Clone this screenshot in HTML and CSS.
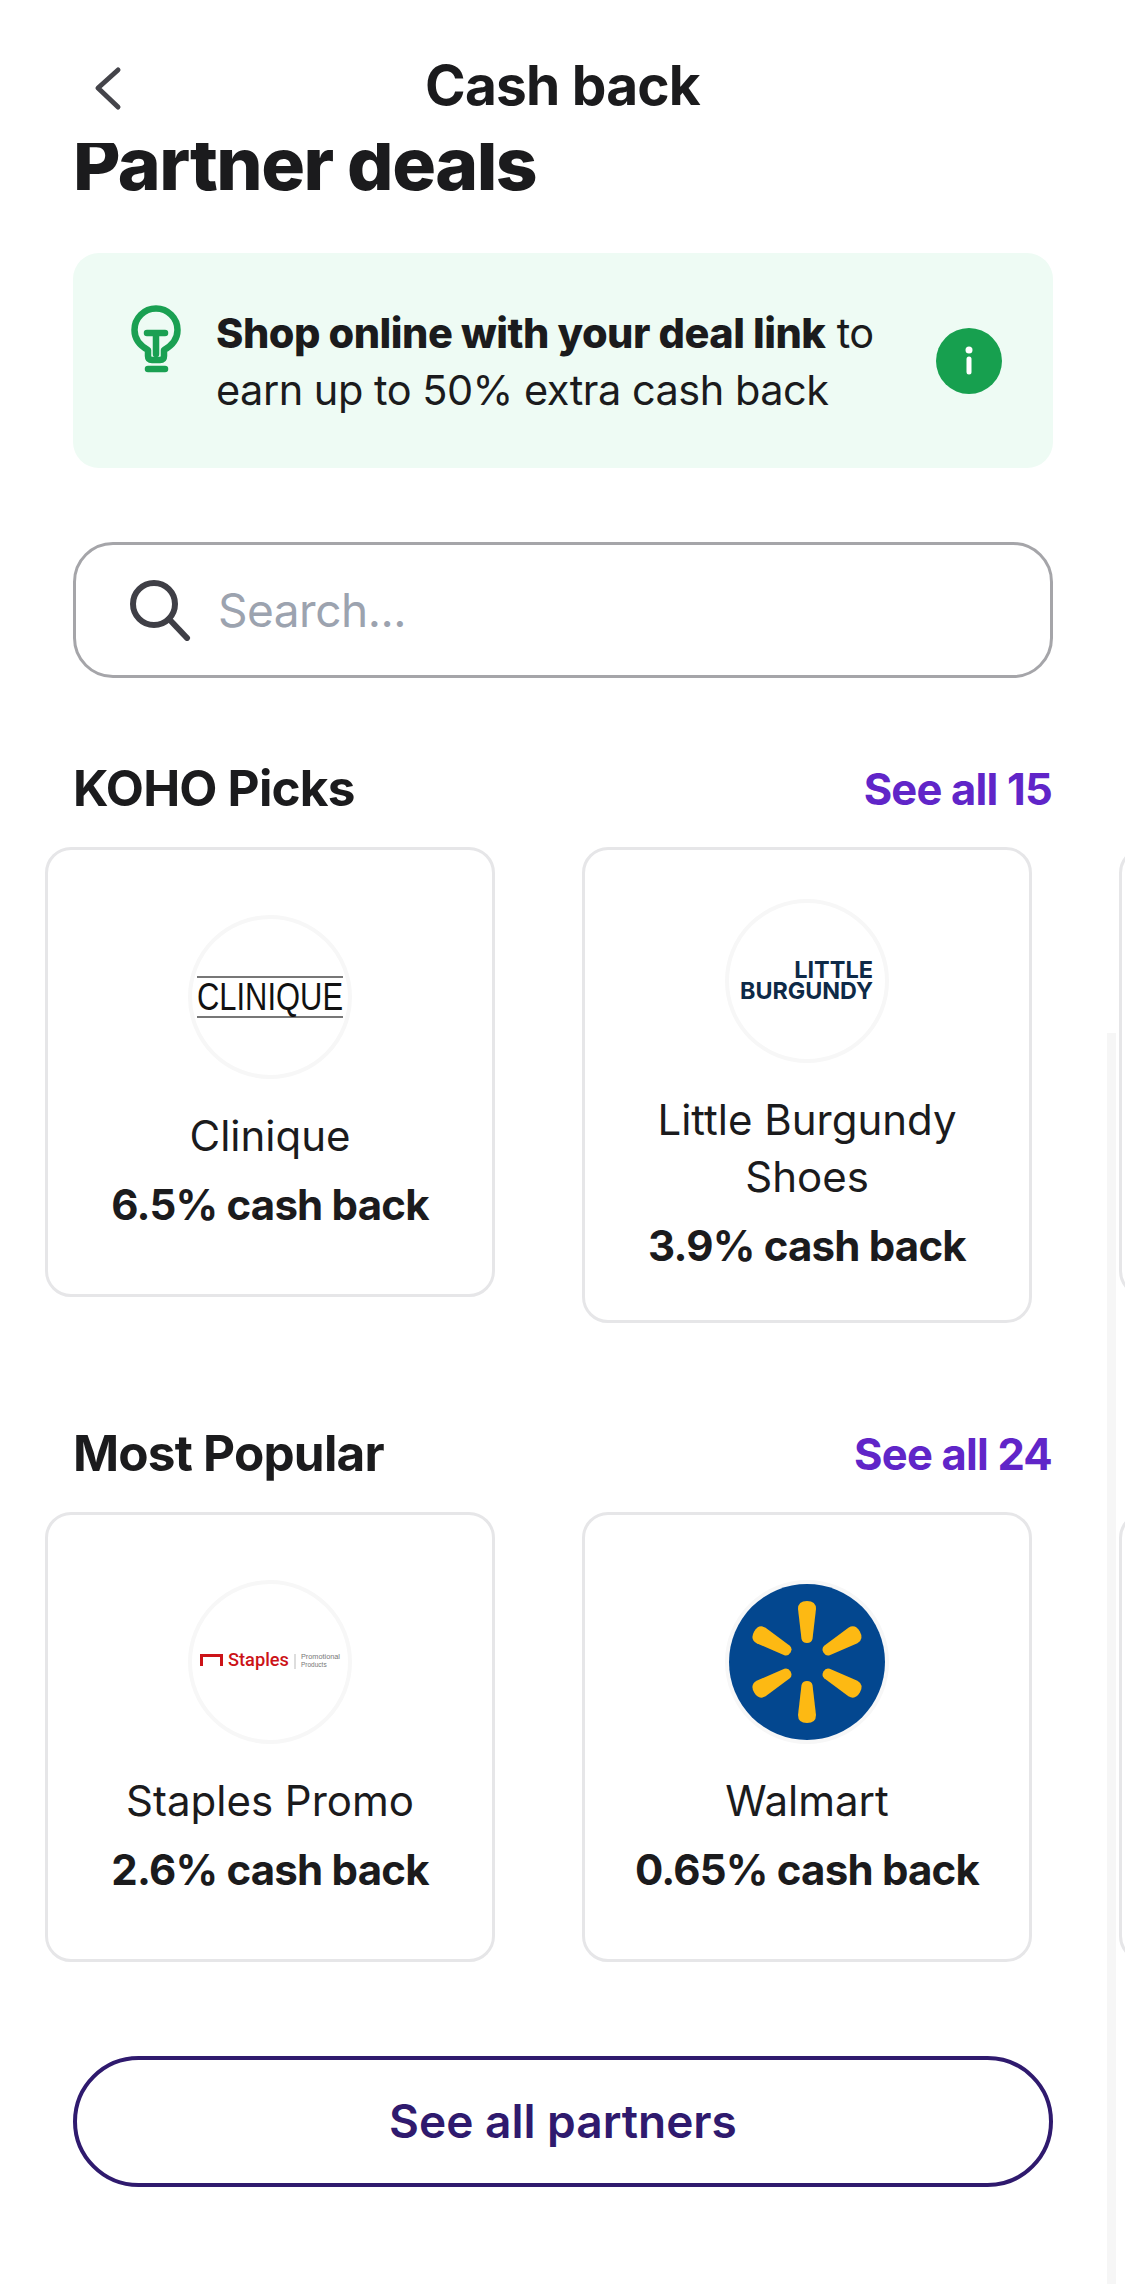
FILE: index.html
```html
<!DOCTYPE html>
<html lang="en">
<head>
    <meta charset="UTF-8">
    <title>Cash back</title>
    <link rel="stylesheet" href="styles.css">
</head>
<body>
<div class="page">
    <div class="topbar">
        <svg class="back" width="40" height="56" viewBox="0 0 40 56"><path d="M30 12 L10 30 L30 49" fill="none" stroke="#44444a" stroke-width="5" stroke-linecap="round" stroke-linejoin="round"/></svg>
        <div class="topbar-title">Cash back</div>
    </div>
    <div class="page-title"><h1>Partner deals</h1></div>

    <div class="banner">
        <svg class="bulb" width="60" height="80" viewBox="0 0 60 80">
            <g fill="none" stroke="#1aa052" stroke-width="6.5" stroke-linecap="round" stroke-linejoin="round">
                <path d="M22 50 C13 45 8.500 38 8.500 30 A21.500 21.500 0 1 1 51.500 30 C51.500 38 47 45 38 50 V56 Q38 60 34 60 H26 Q22 60 22 56 Z"/>
                <path d="M21 33 H39 M30 33 V54"/>
                <path d="M22 69 H39"/>
            </g>
        </svg>
        <p class="banner-text"><b>Shop online with your deal link</b> to<br>earn up to 50% extra cash back</p>
        <div class="info">
            <svg width="66" height="66" viewBox="0 0 66 66"><circle cx="33" cy="33" r="33" fill="#17a04f"/><circle cx="33" cy="22" r="3.500" fill="#fff"/><path d="M33 31 V44" stroke="#fff" stroke-width="5" stroke-linecap="round"/></svg>
        </div>
    </div>

    <div class="search">
        <svg width="62" height="62" viewBox="0 0 62 62"><circle cx="25" cy="25" r="21" fill="none" stroke="#3f3f46" stroke-width="6"/><path d="M40 40 L58 59" stroke="#3f3f46" stroke-width="6" stroke-linecap="round"/></svg>
        <span>Search...</span>
    </div>

    <div class="section-head section-first">
        <h2>KOHO Picks</h2>
        <a href="#">See all 15</a>
    </div>
    <div class="cards">
        <div class="card">
            <div class="logo">
                <svg width="156" height="50" viewBox="0 0 156 50">
                    <path d="M5 5 H151 M5 45 H151" stroke="#777" stroke-width="2"/>
                    <text x="78" y="38" text-anchor="middle" textLength="146" lengthAdjust="spacingAndGlyphs" class="logo-clinique">CLINIQUE</text>
                </svg>
            </div>
            <div class="name">Clinique</div>
            <div class="rate">6.5% cash back</div>
        </div>
        <div class="card">
            <div class="logo">
                <svg width="140" height="50" viewBox="0 0 140 50">
                    <text x="136" y="22" text-anchor="end" class="logo-burgundy">LITTLE</text>
                    <text x="136" y="43" text-anchor="end" textLength="133" lengthAdjust="spacingAndGlyphs" class="logo-burgundy">BURGUNDY</text>
                </svg>
            </div>
            <div class="name">Little Burgundy<br>Shoes</div>
            <div class="rate">3.9% cash back</div>
        </div>
        <div class="card"></div>
    </div>

    <div class="section-head section-second">
        <h2>Most Popular</h2>
        <a href="#">See all 24</a>
    </div>
    <div class="cards">
        <div class="card">
            <div class="logo">
                <svg width="150" height="40" viewBox="0 0 150 40">
                    <path d="M6.500 24 V13.500 H26.500 V24" fill="none" stroke="#cc1318" stroke-width="3"/>
                    <text x="33" y="24" textLength="61" lengthAdjust="spacingAndGlyphs" class="logo-staples">Staples</text>
                    <path d="M100 12 V27" stroke="#bbb" stroke-width="1"/>
                    <text x="106" y="17" textLength="39" lengthAdjust="spacingAndGlyphs" class="logo-promo">Promotional</text>
                    <text x="106" y="25" class="logo-promo">Products</text>
                </svg>
            </div>
            <div class="name">Staples Promo</div>
            <div class="rate">2.6% cash back</div>
        </div>
        <div class="card">
            <div class="logo logo-walmart">
                <svg width="156" height="156" viewBox="-78 -78 156 156">
                    <circle r="78" fill="#03478f"/>
                    <g fill="#fdb913">
                        <path d="M-9 -53 Q-9 -61 0 -61 Q9 -61 9 -53 L5.500 -23 Q4.500 -19 0 -19 Q-4.500 -19 -5.500 -23 Z"/>
                        <path transform="rotate(60)" d="M-9 -53 Q-9 -61 0 -61 Q9 -61 9 -53 L5.500 -23 Q4.500 -19 0 -19 Q-4.500 -19 -5.500 -23 Z"/>
                        <path transform="rotate(120)" d="M-9 -53 Q-9 -61 0 -61 Q9 -61 9 -53 L5.500 -23 Q4.500 -19 0 -19 Q-4.500 -19 -5.500 -23 Z"/>
                        <path transform="rotate(180)" d="M-9 -53 Q-9 -61 0 -61 Q9 -61 9 -53 L5.500 -23 Q4.500 -19 0 -19 Q-4.500 -19 -5.500 -23 Z"/>
                        <path transform="rotate(240)" d="M-9 -53 Q-9 -61 0 -61 Q9 -61 9 -53 L5.500 -23 Q4.500 -19 0 -19 Q-4.500 -19 -5.500 -23 Z"/>
                        <path transform="rotate(300)" d="M-9 -53 Q-9 -61 0 -61 Q9 -61 9 -53 L5.500 -23 Q4.500 -19 0 -19 Q-4.500 -19 -5.500 -23 Z"/>
                    </g>
                </svg>
            </div>
            <div class="name">Walmart</div>
            <div class="rate">0.65% cash back</div>
        </div>
        <div class="card"></div>
    </div>

    <a class="all-partners" href="#">See all partners</a>
    <div class="scroll-thumb"></div>
</div>
</body>
</html>
```

FILE: styles.css
```css
*{
    margin:0;
    padding:0;
    box-sizing:border-box;
}
html,body{
    height:100%;
    overflow:hidden;
    background:#fff;
}
body{
    font-family:"Inter","Liberation Sans",sans-serif;
    color:#1b1b1d;
}
.page{
    position:relative;
    width:1125px;
    height:2284px;
    overflow:hidden;
}
.topbar{
    height:143px;
    padding:58px 0 0 88px;
    position:relative;
}
.back{
    display:block;
}
.topbar-title{
    position:absolute;
    left:0;
    right:0;
    top:53px;
    text-align:center;
    font-size:55px;
    line-height:64px;
    font-weight:700;
    letter-spacing:-0.8px;
}
.page-title{
    height:62px;
    overflow:hidden;
    padding-left:73px;
}
.page-title h1{
    font-size:73px;
    line-height:74px;
    margin-top:-16px;
    font-weight:800;
    letter-spacing:-1.5px;
}
.banner{
    margin:48px 72px 0 73px;
    height:215px;
    background:#eefbf4;
    border-radius:26px;
    display:flex;
    align-items:center;
    padding:0 51px 0 53px;
}
.bulb{
    margin-top:-42px;
    flex:none;
}
.banner-text{
    margin:3px 0 0 30px;
    font-size:41.5px;
    line-height:57px;
    flex:1;
    letter-spacing:-0.5px;
}
.banner-text b{
    font-weight:800;
}
.info{
    flex:none;
    height:66px;
}
.search{
    margin:74px 72px 0 73px;
    height:136px;
    border:3px solid #a5a5a9;
    border-radius:40px;
    display:flex;
    align-items:center;
    padding-left:53px;
    gap:27px;
    font-size:46px;
    letter-spacing:-0.5px;
    color:#9ca3af;
}
.section-head{
    display:flex;
    justify-content:space-between;
    align-items:center;
    padding:0 73px;
    height:64px;
}
.section-first{
    margin-top:78px;
}
.section-head h2{
    font-size:49.5px;
    font-weight:700;
    letter-spacing:-0.8px;
}
.section-head a{
    margin-top:2px;
    font-size:43.5px;
    font-weight:700;
    color:#6025c8;
    text-decoration:none;
    letter-spacing:-0.8px;
}
.cards{
    display:flex;
    align-items:flex-start;
    gap:87px;
    padding-left:45px;
    margin-top:27px;
    width:1125px;
    overflow:hidden;
}
.section-second{
    margin-top:98px;
}
.card{
    flex:none;
    width:450px;
    min-height:450px;
    border:3px solid #e6e6e8;
    border-radius:26px;
    background:#fff;
    padding:49px 10px 46px;
    display:flex;
    flex-direction:column;
    align-items:center;
    justify-content:center;
    text-align:center;
}
.logo{
    width:164px;
    height:164px;
    border:4px solid #f7f7f7;
    border-radius:50%;
    display:flex;
    align-items:center;
    justify-content:center;
}
.logo svg{
    flex:none;
}
.logo-clinique{
    font-family:"Liberation Sans",sans-serif;
    font-size:38px;
    fill:#111;
}
.logo-burgundy{
    font-family:"Inter",sans-serif;
    font-size:23.5px;
    font-weight:700;
    fill:#0e2a47;
}
.logo-staples{
    font-family:"Roboto",sans-serif;
    font-size:18px;
    font-weight:500;
    fill:#cc1318;
}
.logo-promo{
    font-family:"Liberation Sans",sans-serif;
    font-size:6.5px;
    fill:#777;
}
.name{
    margin-top:28px;
    font-size:42px;
    line-height:57px;
}
.rate{
    margin-top:12px;
    font-size:42px;
    line-height:57px;
    font-weight:700;
    letter-spacing:-0.8px;
}
.all-partners{
    display:block;
    margin:94px 72px 0 73px;
    height:131px;
    border:4px solid #2f1a6e;
    border-radius:66px;
    text-align:center;
    font-size:46px;
    line-height:123px;
    font-weight:600;
    color:#2f1a6e;
    text-decoration:none;
}
.scroll-thumb{
    position:absolute;
    left:1107px;
    top:1033px;
    bottom:0;
    width:9px;
    background:#f6f6f6;
}
```
